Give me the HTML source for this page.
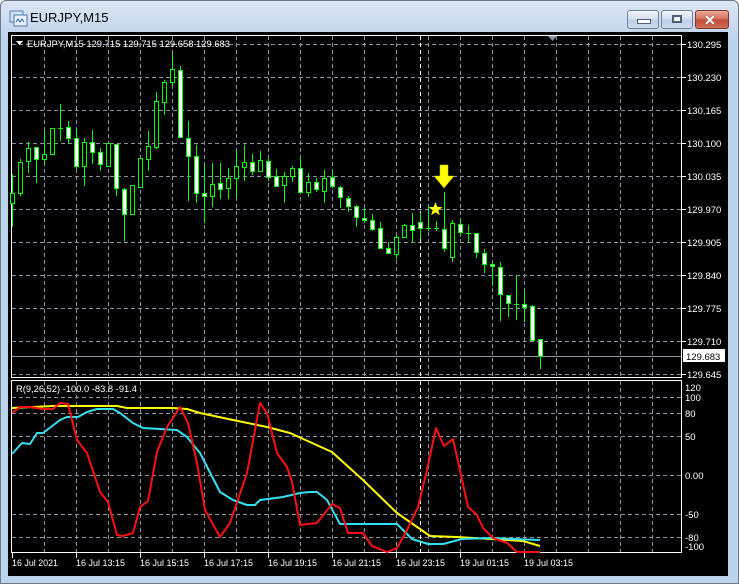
<!DOCTYPE html>
<html><head><meta charset="utf-8"><style>
html,body{margin:0;padding:0;width:739px;height:584px;overflow:hidden;background:#fff}
.win{position:absolute;left:0;top:0;width:737px;height:582px;border:1px solid #6d7a8a;border-radius:6px 6px 0 0;background:linear-gradient(#dbe6f4 0,#c5d7ee 30px,#bcd3ec 40px,#bcd3ec 100%)}
.title{position:absolute;left:30px;top:10px;font:13px "Liberation Sans",sans-serif;color:#000}
.btn{position:absolute;top:10px;height:17px;border:1px solid #6f829b;border-radius:3px;background:linear-gradient(#f1f5fb,#d2def0 50%,#bccde6 51%,#cfdcee)}
.close{background:linear-gradient(#e9a99a,#d46b56 50%,#c04a33 51%,#d0705a);border-color:#7a3a2e}
svg{position:absolute;left:0;top:0}
</style></head><body>
<div class="win"></div>
<svg width="22" height="20" style="left:7px;top:9px"><rect x="3" y="2" width="13" height="11" fill="#cfe0f2" stroke="#5b7fb0"/><rect x="7" y="6" width="13" height="11" fill="#e8f0fa" stroke="#4a78b5"/><path d="M9 13l2-3 2 3 2-3 2 3" stroke="#2f5f9f" fill="none"/></svg>
<div class="title">EURJPY,M15</div>
<div class="btn" style="left:627px;width:30px"><div style="position:absolute;left:9px;top:8px;width:12px;height:3px;background:#fff;border:1px solid #4e5f78"></div></div>
<div class="btn" style="left:661px;width:30px"><div style="position:absolute;left:10px;top:4px;width:8px;height:6px;background:#fff;border:1px solid #4e5f78;box-shadow:inset 0 0 0 1px #4e5f78"></div></div>
<div class="btn close" style="left:695px;width:32px"><div style="position:absolute;left:8px;top:1px;font:bold 14px 'Liberation Sans',sans-serif;color:#fff;text-shadow:0 0 1px #555">✕</div></div>
<svg width="739" height="584" font-family="Liberation Sans, sans-serif" font-size="9.5">
<rect x="8" y="32" width="720" height="544" fill="#000"/>
<g stroke="#8a94a2" stroke-dasharray="4,3" stroke-width="1">
<path d="M44.5 36V378M76.5 36V378M108.5 36V378M140.5 36V378M172.5 36V378M204.5 36V378M236.5 36V378M268.5 36V378M300.5 36V378M332.5 36V378M364.5 36V378M396.5 36V378M428.5 36V378M460.5 36V378M492.5 36V378M524.5 36V378M556.5 36V378M588.5 36V378M620.5 36V378M652.5 36V378"/>
<path d="M12 44.5H682M12 77.5H682M12 110.5H682M12 143.5H682M12 176.5H682M12 209.5H682M12 242.5H682M12 275.5H682M12 308.5H682M12 341.5H682M12 374.5H682"/>
<path d="M44.5 381V552M76.5 381V552M108.5 381V552M140.5 381V552M172.5 381V552M204.5 381V552M236.5 381V552M268.5 381V552M300.5 381V552M332.5 381V552M364.5 381V552M396.5 381V552M428.5 381V552M460.5 381V552M492.5 381V552M524.5 381V552M556.5 381V552M588.5 381V552M620.5 381V552M652.5 381V552"/>
<path d="M12 397.5H682M12 413.5H682M12 436.5H682M12 475.5H682M12 514.5H682M12 537.5H682"/>
</g>
<path d="M420.5 36V378M420.5 381V552" stroke="#fff" stroke-dasharray="4,3"/>
<line x1="12" y1="356.5" x2="682" y2="356.5" stroke="#8a94a2"/>
<rect x="11.5" y="35.5" width="670" height="342" fill="none" stroke="#fff"/>
<rect x="11.5" y="380.5" width="670" height="172" fill="none" stroke="#fff"/>
<path d="M548 36h9l-4.5 5z" fill="#8a94a2"/>
<g stroke="#00ff00" stroke-width="1">
<path d="M12.5 174V227M20.5 159V196M28.5 142V173M36.5 147V183M44.5 130V163M52.5 128V155M60.5 104V141M68.5 121V143M76.5 129V169M84.5 138V186M92.5 130V164M100.5 148V171M108.5 143V167M116.5 144V196M124.5 188V241M132.5 185V215M140.5 158V188M148.5 131V171M156.5 92V149M164.5 80V115M172.5 53V85M180.5 66V137M188.5 121V201M196.5 145V203M204.5 165V223M212.5 163V207M220.5 163V199M228.5 168V199M236.5 150V197M244.5 145V181M252.5 154V175M260.5 151V172M268.5 158V181M276.5 169V187M284.5 172V203M292.5 166V182M300.5 157V192M308.5 173V197M316.5 178V192M324.5 170V203M332.5 172V188M340.5 186V208M348.5 196V212M356.5 205V227M364.5 207V223M372.5 214V231M380.5 222V248M388.5 242V254M396.5 235V259M404.5 224V238M412.5 213V242M420.5 213V239M428.5 205V231M436.5 221V231M444.5 192V252M452.5 220V262M460.5 219V237M468.5 225V243M476.5 233V258M484.5 249V273M492.5 262V286M500.5 262V321M508.5 295V317M516.5 275V320M524.5 291V322M532.5 305V340M540.5 339V369"/>
<path d="M58 128.5H63M426 228.5H431M434 228.5H439M466 233.5H471M490 265.5H495M514 304.5H519"/>
</g>
<g stroke="#00ff00" stroke-width="1">
<rect x="10.5" y="193.5" width="4" height="10" fill="#000"/>
<rect x="18.5" y="162.5" width="4" height="31" fill="#000"/>
<rect x="26.5" y="148.5" width="4" height="13" fill="#000"/>
<rect x="34.5" y="147.5" width="4" height="12" fill="#fff"/>
<rect x="42.5" y="154.5" width="4" height="5" fill="#000"/>
<rect x="50.5" y="128.5" width="4" height="26" fill="#000"/>
<rect x="66.5" y="127.5" width="4" height="11" fill="#fff"/>
<rect x="74.5" y="138.5" width="4" height="28" fill="#fff"/>
<rect x="82.5" y="142.5" width="4" height="24" fill="#000"/>
<rect x="90.5" y="142.5" width="4" height="10" fill="#fff"/>
<rect x="98.5" y="152.5" width="4" height="12" fill="#fff"/>
<rect x="106.5" y="143.5" width="4" height="23" fill="#000"/>
<rect x="114.5" y="144.5" width="4" height="44" fill="#fff"/>
<rect x="122.5" y="189.5" width="4" height="25" fill="#fff"/>
<rect x="130.5" y="185.5" width="4" height="29" fill="#000"/>
<rect x="138.5" y="158.5" width="4" height="29" fill="#000"/>
<rect x="146.5" y="146.5" width="4" height="13" fill="#000"/>
<rect x="154.5" y="101.5" width="4" height="46" fill="#000"/>
<rect x="162.5" y="82.5" width="4" height="20" fill="#000"/>
<rect x="170.5" y="69.5" width="4" height="13" fill="#000"/>
<rect x="178.5" y="70.5" width="4" height="67" fill="#fff"/>
<rect x="186.5" y="138.5" width="4" height="18" fill="#fff"/>
<rect x="194.5" y="156.5" width="4" height="37" fill="#fff"/>
<rect x="202.5" y="193.5" width="4" height="3" fill="#fff"/>
<rect x="210.5" y="184.5" width="4" height="12" fill="#000"/>
<rect x="218.5" y="183.5" width="4" height="6" fill="#fff"/>
<rect x="226.5" y="178.5" width="4" height="10" fill="#000"/>
<rect x="234.5" y="166.5" width="4" height="12" fill="#000"/>
<rect x="242.5" y="162.5" width="4" height="5" fill="#000"/>
<rect x="250.5" y="162.5" width="4" height="9" fill="#fff"/>
<rect x="258.5" y="160.5" width="4" height="11" fill="#000"/>
<rect x="266.5" y="161.5" width="4" height="16" fill="#fff"/>
<rect x="274.5" y="176.5" width="4" height="10" fill="#fff"/>
<rect x="282.5" y="176.5" width="4" height="9" fill="#000"/>
<rect x="290.5" y="168.5" width="4" height="8" fill="#000"/>
<rect x="298.5" y="168.5" width="4" height="24" fill="#fff"/>
<rect x="306.5" y="182.5" width="4" height="10" fill="#000"/>
<rect x="314.5" y="182.5" width="4" height="7" fill="#fff"/>
<rect x="322.5" y="178.5" width="4" height="13" fill="#000"/>
<rect x="330.5" y="177.5" width="4" height="9" fill="#fff"/>
<rect x="338.5" y="187.5" width="4" height="10" fill="#fff"/>
<rect x="346.5" y="198.5" width="4" height="8" fill="#fff"/>
<rect x="354.5" y="206.5" width="4" height="11" fill="#fff"/>
<rect x="362.5" y="218.5" width="4" height="2" fill="#fff"/>
<rect x="370.5" y="220.5" width="4" height="9" fill="#fff"/>
<rect x="378.5" y="228.5" width="4" height="20" fill="#fff"/>
<rect x="386.5" y="248.5" width="4" height="5" fill="#fff"/>
<rect x="394.5" y="237.5" width="4" height="17" fill="#000"/>
<rect x="402.5" y="225.5" width="4" height="12" fill="#000"/>
<rect x="410.5" y="225.5" width="4" height="5" fill="#fff"/>
<rect x="418.5" y="222.5" width="4" height="6" fill="#fff"/>
<rect x="442.5" y="229.5" width="4" height="19" fill="#fff"/>
<rect x="450.5" y="223.5" width="4" height="34" fill="#000"/>
<rect x="458.5" y="224.5" width="4" height="8" fill="#fff"/>
<rect x="474.5" y="233.5" width="4" height="19" fill="#fff"/>
<rect x="482.5" y="253.5" width="4" height="11" fill="#fff"/>
<rect x="490.5" y="264.5" width="4" height="2" fill="#fff"/>
<rect x="498.5" y="267.5" width="4" height="27" fill="#fff"/>
<rect x="506.5" y="295.5" width="4" height="8" fill="#fff"/>
<rect x="522.5" y="304.5" width="4" height="3" fill="#fff"/>
<rect x="530.5" y="306.5" width="4" height="34" fill="#fff"/>
<rect x="538.5" y="339.5" width="4" height="17" fill="#fff"/>
</g>
<path d="M440 165h8v11h6l-10 12-10-12h6z" fill="#ffff00" stroke="#c8c800" stroke-width="0.5"/>
<path d="M435.5 202l1.8 4.9 5.2.2-4.1 3.2 1.4 5-4.3-2.9-4.3 2.9 1.4-5-4.1-3.2 5.2-.2z" fill="#ffff00"/>
<g fill="none" stroke-width="2" stroke-linejoin="round">
<polyline stroke="#ffff00" points="12,408 33,407 53,406 117,406 127,408 173,408 187,409 200,413 233,420 267,427 290,433 332,452 343,462 363,480 397,513 430,536 457,537 523,541 540,546"/>
<polyline stroke="#33e0f0" points="12,454 22,443 30,444 37,433 43,433 60,420 67,417 78,417 87,412 97,409 113,409 120,413 133,423 143,428 177,430 187,437 200,453 220,492 233,500 247,505 255,505 260,500 283,497 300,493 310,492 317,492 327,500 340,524 397,524 412,539 428,544 443,544 462,539 490,538 540,540"/>
<polyline stroke="#ff1010" points="12,413 20,407 30,407 43,409 53,409 60,403 68,404 77,440 87,453 100,492 108,502 117,535 123,536 133,533 140,507 148,501 157,452 167,427 180,407 188,423 197,463 205,510 220,537 230,523 247,473 260,403 267,413 277,453 287,467 292,482 300,525 317,523 332,504 340,508 348,533 363,533 372,546 387,552 397,548 407,530 418,507 427,470 436,428 444,446 453,439 468,507 477,515 483,528 493,538 507,543 517,552 540,552"/>
</g>
<g fill="#fff">
<path d="M16 41h7l-3.5 4z"/>
<text x="27" y="47" textLength="203" lengthAdjust="spacingAndGlyphs">EURJPY,M15  129.715 129.715 129.658 129.683</text>
<text x="16" y="392" textLength="121" lengthAdjust="spacingAndGlyphs">R(9,26,52) -100.0 -83.8 -91.4</text>
</g>
<g stroke="#fff"><path d="M682 44.5h4M682 77.5h4M682 110.5h4M682 143.5h4M682 176.5h4M682 209.5h4M682 242.5h4M682 275.5h4M682 308.5h4M682 341.5h4M682 374.5h4M12.5 553v5M76.5 553v5M140.5 553v5M204.5 553v5M268.5 553v5M332.5 553v5M396.5 553v5M460.5 553v5M524.5 553v5"/></g>
<g fill="#fff">
<text x="687" y="48">130.295</text><text x="687" y="81">130.230</text><text x="687" y="114">130.165</text><text x="687" y="147">130.100</text><text x="687" y="180">130.035</text><text x="687" y="213">129.970</text><text x="687" y="246">129.905</text><text x="687" y="279">129.840</text><text x="687" y="312">129.775</text><text x="687" y="345">129.710</text><text x="687" y="378">129.645</text>
<text x="685" y="391">120</text><text x="685" y="401">100</text><text x="685" y="417">80</text><text x="685" y="440">50</text><text x="685" y="479">0.00</text><text x="685" y="518">-50</text><text x="685" y="541">-80</text><text x="685" y="550">-100</text>
<text x="12" y="566" textLength="46" lengthAdjust="spacingAndGlyphs">16 Jul 2021</text><text x="76" y="566" textLength="49" lengthAdjust="spacingAndGlyphs">16 Jul 13:15</text><text x="140" y="566" textLength="49" lengthAdjust="spacingAndGlyphs">16 Jul 15:15</text><text x="204" y="566" textLength="49" lengthAdjust="spacingAndGlyphs">16 Jul 17:15</text><text x="268" y="566" textLength="49" lengthAdjust="spacingAndGlyphs">16 Jul 19:15</text><text x="332" y="566" textLength="49" lengthAdjust="spacingAndGlyphs">16 Jul 21:15</text><text x="396" y="566" textLength="49" lengthAdjust="spacingAndGlyphs">16 Jul 23:15</text><text x="460" y="566" textLength="49" lengthAdjust="spacingAndGlyphs">19 Jul 01:15</text><text x="524" y="566" textLength="49" lengthAdjust="spacingAndGlyphs">19 Jul 03:15</text>
</g>
<rect x="683" y="349" width="42" height="13" fill="#fff"/>
<text x="686" y="360" fill="#000">129.683</text>
</svg>
</body></html>
